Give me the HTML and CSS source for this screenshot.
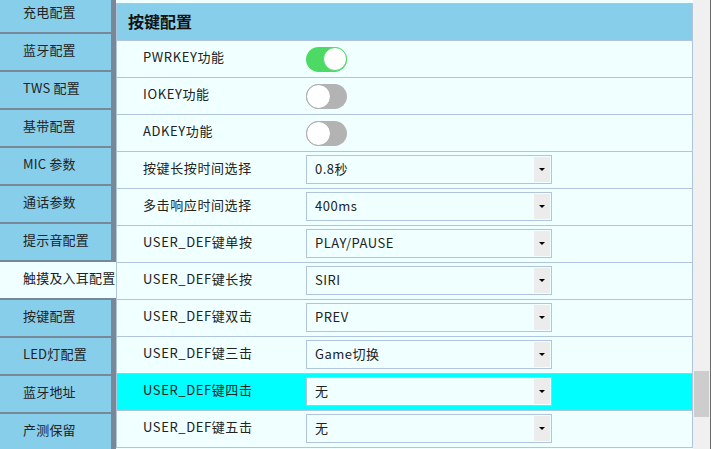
FILE: index.html
```html
<!DOCTYPE html>
<html lang="zh">
<head>
<meta charset="utf-8">
<link rel="stylesheet" href="styles.css">
</head>
<body>
<div class="app">
  <nav class="sidebar">
    <div class="nav-item">充电配置</div>
    <div class="nav-item">蓝牙配置</div>
    <div class="nav-item">TWS 配置</div>
    <div class="nav-item">基带配置</div>
    <div class="nav-item">MIC 参数</div>
    <div class="nav-item">通话参数</div>
    <div class="nav-item">提示音配置</div>
    <div class="nav-item active">触摸及入耳配置</div>
    <div class="nav-item">按键配置</div>
    <div class="nav-item">LED灯配置</div>
    <div class="nav-item">蓝牙地址</div>
    <div class="nav-item">产测保留</div>
  </nav>
  <main class="content">
    <div class="panel">
      <div class="panel-head">按键配置</div>
      <div class="row"><div class="label">PWRKEY功能</div><div class="ctrl"><span class="toggle on"><span class="knob"></span></span></div></div>
      <div class="row"><div class="label">IOKEY功能</div><div class="ctrl"><span class="toggle"><span class="knob"></span></span></div></div>
      <div class="row"><div class="label">ADKEY功能</div><div class="ctrl"><span class="toggle"><span class="knob"></span></span></div></div>
      <div class="row"><div class="label">按键长按时间选择</div><div class="ctrl"><div class="select"><span class="val">0.8秒</span><span class="arrow"></span></div></div></div>
      <div class="row"><div class="label">多击响应时间选择</div><div class="ctrl"><div class="select"><span class="val">400ms</span><span class="arrow"></span></div></div></div>
      <div class="row"><div class="label">USER_DEF键单按</div><div class="ctrl"><div class="select"><span class="val">PLAY/PAUSE</span><span class="arrow"></span></div></div></div>
      <div class="row"><div class="label">USER_DEF键长按</div><div class="ctrl"><div class="select"><span class="val">SIRI</span><span class="arrow"></span></div></div></div>
      <div class="row"><div class="label">USER_DEF键双击</div><div class="ctrl"><div class="select"><span class="val">PREV</span><span class="arrow"></span></div></div></div>
      <div class="row"><div class="label">USER_DEF键三击</div><div class="ctrl"><div class="select"><span class="val">Game切换</span><span class="arrow"></span></div></div></div>
      <div class="row hl"><div class="label">USER_DEF键四击</div><div class="ctrl"><div class="select"><span class="val">无</span><span class="arrow"></span></div></div></div>
      <div class="row"><div class="label">USER_DEF键五击</div><div class="ctrl"><div class="select"><span class="val">无</span><span class="arrow"></span></div></div></div>
    </div>
  </main>
  <div class="scrollbar"><div class="thumb"></div></div>
</div>
</body>
</html>
```

FILE: styles.css
```css
* { box-sizing: border-box; }
html, body { margin: 0; padding: 0; height: 100%; overflow: hidden; }
body {
  font-family: "Noto Sans CJK SC", "Noto Sans", sans-serif;
  font-size: 13px;
  color: #222;
  background: #f0ffff;
}
.app {
  display: flex;
  height: 449px;
  overflow: hidden;
}
.sidebar {
  width: 116px;
  flex: none;
  background: #778899;
  display: flex;
  flex-direction: column;
  gap: 2px;
  margin-top: -4px;
}
.nav-item {
  width: 111px;
  height: 36px;
  flex: none;
  background: #87ceeb;
  display: flex;
  align-items: center;
  padding-left: 23px;
  padding-bottom: 5px;
  white-space: nowrap;
  letter-spacing: 0.2px;
}
.nav-item.active {
  width: 116px;
  background: #f0ffff;
}
.content {
  width: 577px;
  flex: none;
  padding-top: 3px;
  background: #f0ffff;
}
.panel {
  border: 1px solid #b0c4de;
  border-bottom: none;
}
.panel-head {
  height: 37px;
  background: #87ceeb;
  border-bottom: 1px solid #b0c4de;
  font-size: 16px;
  font-weight: bold;
  color: #111;
  display: flex;
  align-items: center;
  padding-left: 11px;
  padding-bottom: 2px;
}
.row {
  height: 37px;
  border-bottom: 1px solid #b0c4de;
  display: grid;
  grid-template-columns: 189px 1fr;
  align-items: center;
}
.row.hl { background: #00ffff; }
.label {
  padding-left: 26px;
  padding-bottom: 5px;
  white-space: nowrap;
  letter-spacing: 0.6px;
}
.ctrl { display: flex; align-items: center; }
.toggle {
  width: 41px;
  height: 25px;
  border-radius: 13px;
  background: #b3b3b3;
  display: flex;
  align-items: center;
  justify-content: flex-start;
}
.toggle .knob {
  width: 25px;
  height: 25px;
  border-radius: 50%;
  background: #fff;
  border: 1px solid #a8a8a8;
}
.toggle.on {
  background: #4cd964;
  justify-content: flex-end;
}
.toggle.on .knob {
  width: 24px;
  height: 24px;
  border: 1px solid #4cd964;
}
.select {
  width: 246px;
  height: 29px;
  border: 1px solid #b0c4de;
  background: #f0ffff;
  display: flex;
  align-items: center;
  justify-content: space-between;
  margin-bottom: 1px;
}
.select .val {
  padding-left: 8px;
  padding-bottom: 2px;
  letter-spacing: 0.5px;
}
.select .arrow {
  width: 16px;
  height: 25px;
  margin-right: 1px;
  background: #ececec;
  position: relative;
}
.select .arrow::after {
  content: "";
  position: absolute;
  left: 5px;
  top: 11px;
  border-left: 3px solid transparent;
  border-right: 3px solid transparent;
  border-top: 3px solid #000;
}
.scrollbar {
  flex: 1;
  background: #f0f0f0;
  border-right: 1px solid #6a6a6a;
  padding: 371px 1px 0 1px;
}
.thumb {
  height: 46px;
  background: #cdcdcd;
}
```
